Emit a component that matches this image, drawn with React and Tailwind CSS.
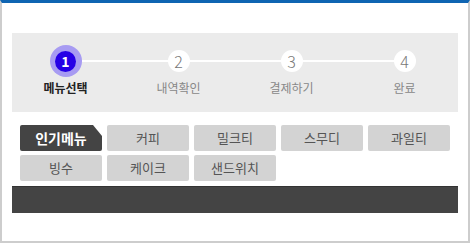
import React from "react";

const steps = [
  { no: 1, label: "메뉴선택", active: true },
  { no: 2, label: "내역확인" },
  { no: 3, label: "결제하기" },
  { no: 4, label: "완료" },
];

const tabs = ["인기메뉴", "커피", "밀크티", "스무디", "과일티", "빙수", "케이크", "샌드위치"];

const Step = ({ no, label, active }) => (
  <div className="w-[113px] flex flex-col items-center">
    <div className="h-[32px] w-[32px] flex items-center justify-center">
      {active ? (
        <div className="w-[32px] h-[32px] rounded-full bg-[#a79bf2] flex items-center justify-center">
          <div className="w-[21px] h-[21px] rounded-full bg-[#2600e6] flex items-center justify-center text-white text-[14px] font-bold leading-none">
            {no}
          </div>
        </div>
      ) : (
        <div className="w-[22px] h-[22px] rounded-full bg-white flex items-center justify-center text-[#777] text-[16px] font-light leading-none">
          {no}
        </div>
      )}
    </div>
    <div
      className={
        "mt-[3px] text-[12px] leading-[16px] " +
        (active ? "text-[#222] font-bold" : "text-[#888]")
      }
    >
      {label}
    </div>
  </div>
);

export default function App() {
  return (
    <div className="w-[470px] h-[243px] bg-white border-t-[3px] border-t-[#0f65b2] border-x-2 border-b-2 border-x-[#cdcdcd] border-b-[#cdcdcd] px-[10px] pt-[30px] font-['Noto_Sans_CJK_KR',sans-serif]">
      {/* steps */}
      <div className="h-[79px] bg-[#ebebeb] pt-[12px]">
        <div className="relative flex ml-[-3px]">
          <div className="absolute left-[56px] right-[56px] top-[15px] h-[2px] bg-white" />
          {steps.map((s) => (
            <div key={s.no} className="relative">
              <Step {...s} />
            </div>
          ))}
        </div>
      </div>

      {/* menu tabs */}
      <div className="ml-[8px] mt-[13px] grid grid-cols-[repeat(5,82px)] gap-x-[5px] gap-y-[4px]">
        {tabs.map((t, i) =>
          i === 0 ? (
            <div
              key={t}
              className="h-[26px] bg-[#444] text-white text-[14px] font-bold flex items-center justify-center rounded-[2px] [clip-path:polygon(0_0,calc(100%-9px)_0,100%_11px,100%_100%,0_100%)]"
            >
              {t}
            </div>
          ) : (
            <div
              key={t}
              className="h-[26px] bg-[#d3d3d3] rounded-[2px] text-[#555] text-[13px] flex items-center justify-center"
            >
              {t}
            </div>
          )
        )}
      </div>

      <div className="mt-[5px] h-[27px] bg-[#444] border-t border-t-[#333]" />
    </div>
  );
}
